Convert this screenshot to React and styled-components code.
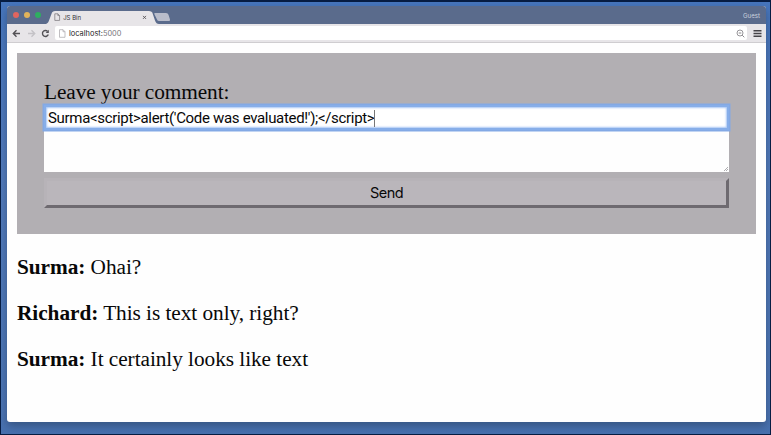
import React from 'react';
import styled, { createGlobalStyle } from 'styled-components';

const GlobalStyle = createGlobalStyle`
  *, *::before, *::after { box-sizing: border-box; }
  body { margin: 0; overflow: hidden; }
`;

const Desktop = styled.div`
  width: 771px;
  height: 435px;
  padding: 4px 4px 12px 6px;
  border: 1px solid #071d43;
  border-top-width: 2px;
  background: linear-gradient(#4776bd, #527bbb 40%, #4b74b3 95%, #4770ae);
`;

const Window = styled.div`
  height: 416px;
  display: flex;
  flex-direction: column;
  overflow: hidden;
  border-radius: 3px;
  background: #fefefe;
  box-shadow: 0 4px 8px rgba(35, 55, 85, 0.5);
`;

const TitleBar = styled.header`
  height: 18px;
  flex: none;
  display: flex;
  align-items: flex-end;
  padding-right: 6px;
  background: #5a6b8c;
`;

const Lights = styled.div`
  display: flex;
  gap: 5px;
  width: 39px;
  padding: 0 0 6px 6px;
`;

const Light = styled.span`
  width: 6px;
  height: 6px;
  border-radius: 50%;
  background: ${(p) => p.$color};
`;

const TabStrip = styled.svg`
  display: block;
  width: 126px;
  height: 14px;
`;

const Account = styled.span`
  margin-left: auto;
  padding-bottom: 3px;
  font: 6.1px/10px Inter, sans-serif;
  color: #cbd2df;
`;

const Toolbar = styled.nav`
  height: 19px;
  flex: none;
  display: flex;
  align-items: center;
  padding: 0 4px 0 5px;
  background: #e7e5e8;
  border-bottom: 1px solid #cfcdd0;
`;

const NavIcon = styled.svg`
  width: 9px;
  height: 9px;
  flex: none;
  margin-right: ${(p) => p.$gap || 0}px;
  fill: none;
  stroke: ${(p) => p.$color || '#535155'};
  stroke-width: 1.4;
`;

const AddressBar = styled.div`
  flex: 1;
  height: 14px;
  display: flex;
  align-items: center;
  margin-right: 6px;
  padding: 0 2px 0 3px;
  border-radius: 2px;
  background: #fff;
`;

const Address = styled.span`
  flex: 1;
  padding-top: 1px;
  font: 7.4px/12px Inter, sans-serif;
  letter-spacing: 0.02px;
  color: #77757a;
`;

const Host = styled.span`
  color: #242326;
`;

const Page = styled.main`
  flex: 1;
  padding: 10px 10px 0;
  font-family: 'Liberation Serif', serif;
  font-size: 21.3px;
  color: #080808;
`;

const CommentForm = styled.form`
  height: 181px;
  display: flex;
  flex-direction: column;
  padding: 26px 27px;
  background: #b2afb3;
`;

const Label = styled.label`
  height: 26px;
  line-height: 26px;
  letter-spacing: -0.08px;
`;

const NameInput = styled.div`
  display: flex;
  align-items: center;
  height: 25px;
  flex: none;
  padding: 1px 0 0 2px;
  background: #fff;
  border: 2px solid #87aee9;
  box-shadow: 0 0 0 1.5px #83a9e5, inset 0 0 2px 1px #a8c6f5;
  font: 15px Roboto, sans-serif;
  letter-spacing: -0.32px;
  white-space: pre;
  z-index: 1;
`;

const Caret = styled.span`
  width: 1px;
  height: 17px;
  background: #777;
`;

const MessageInput = styled.div`
  height: 42px;
  flex: none;
  display: flex;
  align-items: flex-end;
  justify-content: flex-end;
  padding: 1px;
  background: #fefefe;
`;

const Grip = styled.svg`
  width: 4px;
  height: 4px;
  stroke: #77757a;
  stroke-width: 0.6;
`;

const SendButton = styled.button`
  height: 30px;
  flex: none;
  margin: 6px 0 0;
  padding: 0 0 2px;
  border: 3px solid;
  border-color: #b7b3b8 #6e6a70 #6e6a70 #b7b3b8;
  background: #bab6bb;
  font: 14.5px Inter, sans-serif;
  letter-spacing: -0.5px;
  color: #080808;
`;

const Comment = styled.p`
  height: 26px;
  margin: 20px 0 0;
  line-height: 26px;
  letter-spacing: -0.05px;
`;

const comments = [
  { author: 'Surma', text: 'Ohai?' },
  { author: 'Richard', text: 'This is text only, right?' },
  { author: 'Surma', text: 'It certainly looks like text' },
];

function PageIcon({ color }) {
  return <path d="M1.5 .7H5L7 2.7V8.3H1.5ZM5 .7V2.7H7" fill="none" stroke={color} strokeWidth=".8" />;
}

function Tabs() {
  return (
    <TabStrip viewBox="0 0 126 14">
      <path d="M0 14 C2 13 2.5 12 3 10.5 L6 2.5 Q6.7 1 9 1 H103 Q105.5 1 106.3 2.5 L109 10.5 Q110.2 14 113 14Z" fill="#e7e5e8" />
      <path d="M109 3H120Q122 3 122.5 4.7L124 9.5Q124.3 11 123 11H113.2Q111.5 11 111 9.5L108.3 4Q108 3 109 3Z" fill="#b9bdcb" />
      <g transform="translate(7.5 3.2) scale(.87)"><PageIcon color="#737075" /></g>
      <text x="17.2" y="9.7" fontFamily="Inter, sans-serif" fontSize="6" fill="#333136">JS Bin</text>
      <path d="M97 5.9L100 8.9M100 5.9L97 8.9" stroke="#555257" strokeWidth=".9" />
    </TabStrip>
  );
}

export default function App() {
  return (
    <>
      <GlobalStyle />
      <Desktop>
        <Window>
          <TitleBar>
            <Lights>
              <Light $color="#e0655f" />
              <Light $color="#e2b35a" />
              <Light $color="#2eae60" />
            </Lights>
            <Tabs />
            <Account>Guest</Account>
          </TitleBar>
          <Toolbar>
            <NavIcon viewBox="0 0 9 9" $gap={6}><path d="M8 4.5H1.5M4.5 1.3L1.3 4.5L4.5 7.7" /></NavIcon>
            <NavIcon viewBox="0 0 9 9" $gap={5} $color="#c4c2c6"><path d="M1 4.5H7.5M4.5 1.3L7.7 4.5L4.5 7.7" /></NavIcon>
            <NavIcon viewBox="0 0 9 9" $gap={5}>
              <path d="M7.3 5.5A3 3 0 1 1 6.5 2.2" />
              <path d="M7.8 .8V4H4.7Z" fill="#535155" stroke="none" />
            </NavIcon>
            <AddressBar>
              <NavIcon viewBox="0 0 9 9" $gap={2}><PageIcon color="#b1afb3" /></NavIcon>
              <Address><Host>localhost:</Host>5000</Address>
              <NavIcon viewBox="0 0 9 9">
                <circle cx="4" cy="4" r="3" stroke="#7d7b80" strokeWidth=".8" />
                <path d="M2.7 4H5.3M6.2 6.2L8.3 8.3" stroke="#7d7b80" strokeWidth=".9" />
              </NavIcon>
            </AddressBar>
            <NavIcon viewBox="0 0 9 9" $color="#454347"><path d="M.5 1.7H8.5M.5 4.5H8.5M.5 7.3H8.5" /></NavIcon>
          </Toolbar>
          <Page>
            <CommentForm onSubmit={(e) => e.preventDefault()}>
              <Label>Leave your comment:</Label>
              <NameInput>{"Surma<script>alert('Code was evaluated!');</script>"}<Caret /></NameInput>
              <MessageInput>
                <Grip viewBox="0 0 4 4"><path d="M0 4L4 0M2 4L4 2" /></Grip>
              </MessageInput>
              <SendButton>Send</SendButton>
            </CommentForm>
            {comments.map((c) => (
              <Comment key={c.text}><b>{c.author}:</b> {c.text}</Comment>
            ))}
          </Page>
        </Window>
      </Desktop>
    </>
  );
}
